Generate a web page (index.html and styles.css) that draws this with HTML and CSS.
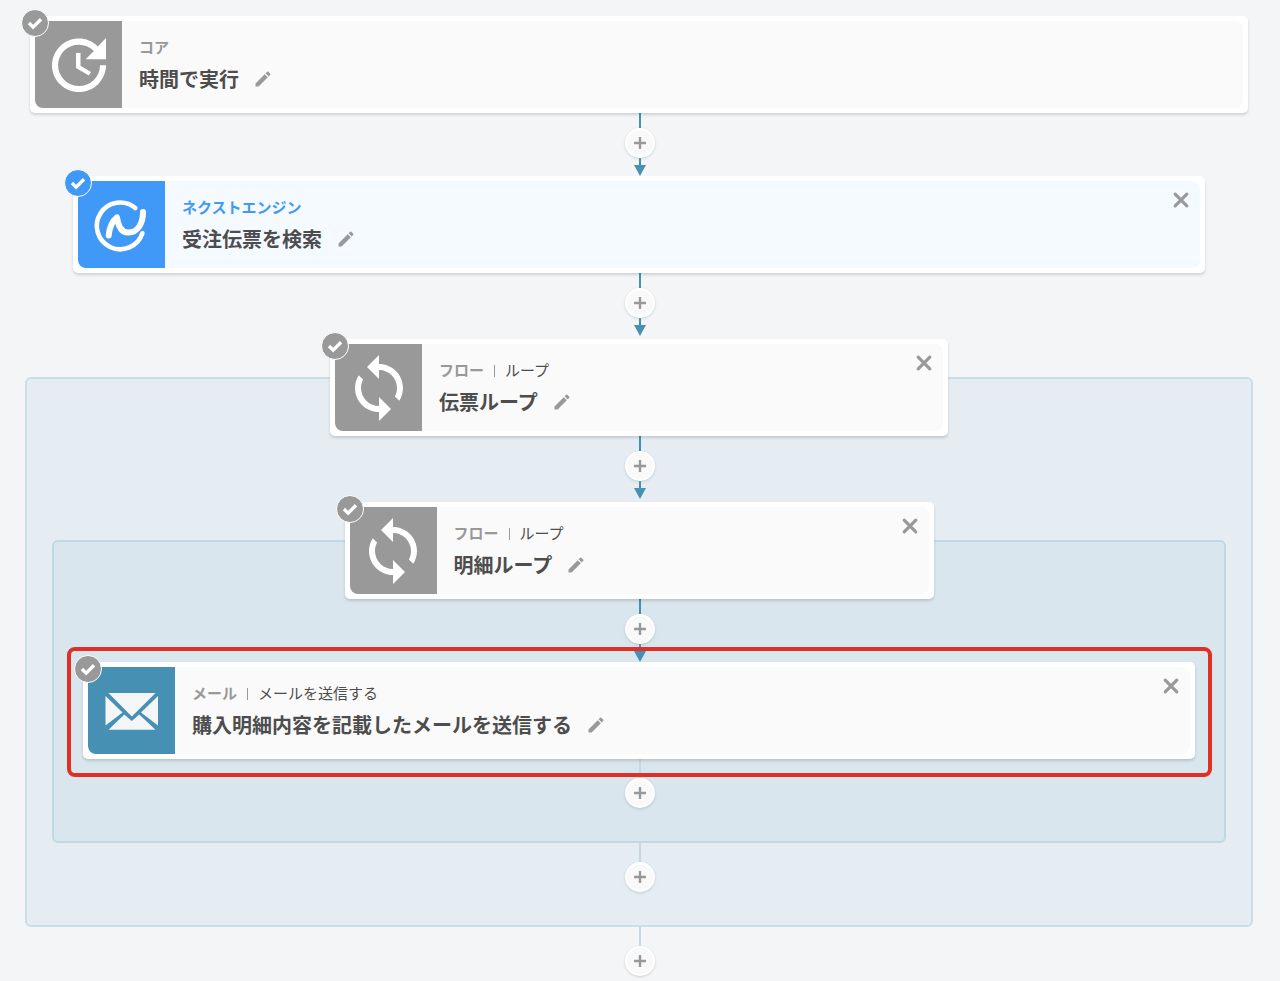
FILE: index.html
```html
<!DOCTYPE html>
<html lang="ja">
<head>
    <meta charset="UTF-8">
    <meta name="viewport" content="width=device-width, initial-scale=1.0">
    <title>フロー</title>
    <link rel="stylesheet" href="styles.css">
</head>
<body>
    <svg class="sprite" aria-hidden="true">
        <symbol id="i-check" viewBox="0 0 28 28"><path d="M7.5 14l4.5 4.5 8.5-8.5" fill="none" stroke="currentColor" stroke-width="3.6"/></symbol>
        <symbol id="i-edit" viewBox="0 0 24 24"><path fill="currentColor" d="M3 17.25V21h3.75L17.81 9.94l-3.75-3.75L3 17.25zM20.71 7.04a1 1 0 0 0 0-1.41l-2.34-2.34a1 1 0 0 0-1.41 0l-1.83 1.83 3.75 3.75 1.83-1.83z"/></symbol>
        <symbol id="i-close" viewBox="0 0 24 24"><path d="M6.2 6.2l11.6 11.6M17.8 6.2L6.2 17.8" fill="none" stroke="currentColor" stroke-width="3.2" stroke-linecap="round"/></symbol>
        <symbol id="i-plus" viewBox="0 0 12 12"><path d="M6 0v12M0 6h12" fill="none" stroke="currentColor" stroke-width="2.4"/></symbol>
        <symbol id="i-clock" viewBox="0 0 24 24"><path fill="currentColor" d="M21 10.12h-6.78l2.74-2.82c-2.73-2.7-7.15-2.8-9.88-.1-2.73 2.71-2.73 7.08 0 9.79s7.15 2.71 9.88 0C18.32 15.65 19 14.08 19 12.1h2c0 1.98-.88 4.55-2.64 6.29-3.51 3.48-9.21 3.48-12.72 0-3.5-3.47-3.53-9.11-.02-12.58s9.14-3.47 12.65 0L21 3v7.12zM12.5 8v4.25l3.5 2.08-.72 1.21L11 13V8h1.5z"/></symbol>
        <symbol id="i-loop" viewBox="0 0 24 24"><path fill="currentColor" d="M12 4V1L8 5l4 4V6c3.31 0 6 2.69 6 6 0 1.01-.25 1.97-.7 2.8l1.46 1.46C19.54 15.03 20 13.57 20 12c0-4.42-3.58-8-8-8zm0 14c-3.31 0-6-2.69-6-6 0-1.01.25-1.97.7-2.8L5.24 7.74C4.46 8.97 4 10.43 4 12c0 4.42 3.58 8 8 8v3l4-4-4-4v3z"/></symbol>
    </svg>

    <main class="flow">
        <article class="card">
            <span class="badge"><svg><use href="#i-check"/></svg></span>
            <div class="card-icon"><svg class="glyph"><use href="#i-clock"/></svg></div>
            <div class="card-body">
                <div class="card-text">
                    <p class="card-app"><b>コア</b></p>
                    <div class="card-title"><h2>時間で実行</h2><button class="edit" aria-label="編集"><svg><use href="#i-edit"/></svg></button></div>
                </div>
            </div>
        </article>

        <div class="connector"><button class="add" aria-label="追加"><svg><use href="#i-plus"/></svg></button></div>

        <article class="card card-wide card-blue">
            <span class="badge"><svg><use href="#i-check"/></svg></span>
            <div class="card-icon">
                <svg class="logo" viewBox="0 0 87 87" fill="none" stroke="#fff" stroke-linecap="round">
                    <path stroke-width="4.6" d="M57.3 27A23.4 23.4 0 1 0 64.4 52.3"/>
                    <path stroke-width="6" stroke-linejoin="round" d="M30.7 54.5C31.2 49 33.7 40.5 39 36.3C39.7 42 41.2 51.3 50.2 51.6C59.7 51.7 65 42.5 65 31"/>
                </svg>
            </div>
            <div class="card-body">
                <div class="card-text">
                    <p class="card-app"><b>ネクストエンジン</b></p>
                    <div class="card-title"><h2>受注伝票を検索</h2><button class="edit" aria-label="編集"><svg><use href="#i-edit"/></svg></button></div>
                </div>
                <button class="close" aria-label="削除"><svg><use href="#i-close"/></svg></button>
            </div>
        </article>

        <div class="connector"><button class="add" aria-label="追加"><svg><use href="#i-plus"/></svg></button></div>

        <section class="loop">
            <article class="card card-loop">
                <span class="badge"><svg><use href="#i-check"/></svg></span>
                <div class="card-icon"><svg class="glyph"><use href="#i-loop"/></svg></div>
                <div class="card-body">
                    <div class="card-text">
                        <p class="card-app"><b>フロー</b><span class="action">ループ</span></p>
                        <div class="card-title"><h2>伝票ループ</h2><button class="edit" aria-label="編集"><svg><use href="#i-edit"/></svg></button></div>
                    </div>
                    <button class="close" aria-label="削除"><svg><use href="#i-close"/></svg></button>
                </div>
            </article>

            <div class="connector"><button class="add" aria-label="追加"><svg><use href="#i-plus"/></svg></button></div>

            <section class="loop loop-inner">
                <article class="card card-loop">
                    <span class="badge"><svg><use href="#i-check"/></svg></span>
                    <div class="card-icon"><svg class="glyph"><use href="#i-loop"/></svg></div>
                    <div class="card-body">
                        <div class="card-text">
                            <p class="card-app"><b>フロー</b><span class="action">ループ</span></p>
                            <div class="card-title"><h2>明細ループ</h2><button class="edit" aria-label="編集"><svg><use href="#i-edit"/></svg></button></div>
                        </div>
                        <button class="close" aria-label="削除"><svg><use href="#i-close"/></svg></button>
                    </div>
                </article>

                <div class="connector"><button class="add" aria-label="追加"><svg><use href="#i-plus"/></svg></button></div>

                <article class="card card-nested card-mail selected">
                    <span class="badge"><svg><use href="#i-check"/></svg></span>
                    <div class="card-icon">
                        <svg class="logo" viewBox="0 0 87 87" fill="#f4f6f8">
                            <path d="M20.5 26H67.5L43.8 49.5Z"/>
                            <path d="M17.5 29V58.5L34.5 45.5Z"/>
                            <path d="M70 29V58.5L53 45.5Z"/>
                            <path d="M20.5 62.7H67.5L51.2 47.4L43.8 54L36.3 47.4Z"/>
                        </svg>
                    </div>
                    <div class="card-body">
                        <div class="card-text">
                            <p class="card-app"><b>メール</b><span class="action">メールを送信する</span></p>
                            <div class="card-title"><h2>購入明細内容を記載したメールを送信する</h2><button class="edit" aria-label="編集"><svg><use href="#i-edit"/></svg></button></div>
                        </div>
                        <button class="close" aria-label="削除"><svg><use href="#i-close"/></svg></button>
                    </div>
                </article>

                <div class="connector tail"><button class="add" aria-label="追加"><svg><use href="#i-plus"/></svg></button></div>
            </section>

            <div class="connector tail"><button class="add" aria-label="追加"><svg><use href="#i-plus"/></svg></button></div>
        </section>

        <div class="connector tail"><button class="add" aria-label="追加"><svg><use href="#i-plus"/></svg></button></div>
    </main>
</body>
</html>
```
FILE: styles.css
```css
:root {
    --bg: #f4f5f7;
    --text: #4d4d4d;
    --gray: #999;
    --blue: #4199f7;
    --teal: #4690b4;
    --line-light: #c3dae6;
    --red: #e02f24;
}

* {
    box-sizing: border-box;
}
body {
    margin: 0;
    background-color: var(--bg);
    color: var(--text);
    font-family: "Noto Sans CJK JP", sans-serif;
}
button {
    padding: 0;
    border: none;
    background: none;
    color: var(--gray);
    cursor: pointer;
}
svg {
    display: block;
    width: 100%;
    height: 100%;
}
.sprite {
    position: absolute;
    width: 0;
    height: 0;
}
.flow {
    display: flex;
    flex-direction: column;
    padding: 16px 27px 5px 25px;
}

/* cards */
.card {
    position: relative;
    display: flex;
    margin: 0 5px;
    padding: 5px;
    border-radius: 5px;
    background-color: #fff;
    box-shadow: 0 2px 3px rgba(0, 0, 0, 0.15);
}
.card-wide {
    margin: 0 48px;
}
.card-nested {
    margin: 0 29px;
}
.card-icon {
    flex: none;
    width: 87px;
    height: 87px;
    display: flex;
    align-items: center;
    justify-content: center;
    border-radius: 0 0 0 8px;
    background-color: var(--gray);
    color: #fff;
}
.card-blue .card-icon,
.card-blue .badge {
    background-color: var(--blue);
}
.card-mail .card-icon {
    background-color: var(--teal);
}
.glyph {
    width: 72px;
    height: 72px;
}
.card-body {
    flex: 1;
    display: flex;
    justify-content: space-between;
    padding-left: 17px;
    border-radius: 0 8px 8px 0;
    background-color: #fafafa;
}
.card-blue .card-body {
    background-color: #f4faff;
}
.card-text {
    padding-top: 16px;
}
.card-app {
    display: flex;
    align-items: center;
    margin: 0;
    font-size: 15px;
    line-height: 20px;
}
.card-app b {
    color: var(--gray);
}
.card-blue .card-app b {
    color: var(--blue);
}
.action::before {
    content: "";
    display: inline-block;
    width: 1px;
    height: 12px;
    margin: 0 10px;
    vertical-align: -1px;
    background-color: var(--gray);
}
.card-title {
    display: flex;
    align-items: center;
    gap: 14px;
    margin-top: 6px;
}
.card-title h2 {
    margin: 0;
    font-size: 20px;
    line-height: 32px;
}
.edit {
    width: 20px;
    height: 20px;
}
.close {
    width: 24px;
    height: 24px;
    margin: 7px 7px 0 0;
}
.badge {
    position: absolute;
    top: -7px;
    left: -9px;
    width: 28px;
    height: 28px;
    border: 1px solid #fff;
    border-radius: 50%;
    background-color: var(--gray);
    color: #fff;
}
.selected::after {
    content: "";
    position: absolute;
    inset: -15px -17px -18px -16px;
    border: 4px solid var(--red);
    border-radius: 8px;
    pointer-events: none;
}

/* connectors */
.connector {
    display: flex;
    flex-direction: column;
    align-items: center;
    height: 63px;
    padding-left: 2px;
}
.connector::before {
    content: "";
    width: 2px;
    height: 15px;
    background-color: var(--teal);
}
.connector::after {
    content: "";
    width: 12px;
    height: 18px;
    background-color: var(--teal);
    clip-path: polygon(5px 0, 7px 0, 7px 7px, 12px 7px, 6px 18px, 0 7px, 5px 7px);
}
.tail {
    height: auto;
}
.tail::before {
    height: 19px;
    background-color: var(--line-light);
}
.tail::after {
    display: none;
}
.add {
    display: flex;
    align-items: center;
    justify-content: center;
    width: 30px;
    height: 30px;
    border: 2px solid #fff;
    border-radius: 50%;
    background-color: #f9f9f9;
    box-shadow: 0 1px 3px rgba(0, 0, 0, 0.15);
}
.add svg {
    width: 12px;
    height: 12px;
}

/* loops: the head card sits across the top border */
.loop {
    display: flex;
    flex-direction: column;
    margin-top: 41px;
    padding: 0 25px 33px;
    border: 2px solid #c9dee9;
    border-radius: 6px;
    background-color: #e5edf3;
}
.loop-inner {
    padding: 0 0 33px;
    border-color: #bfd9e4;
    background-color: #d9e6ed;
}
.card-loop {
    width: calc(50% + 31px);
    margin: -40px auto 0;
}
.loop-inner .card-loop {
    width: calc(50% + 4px);
}
```
